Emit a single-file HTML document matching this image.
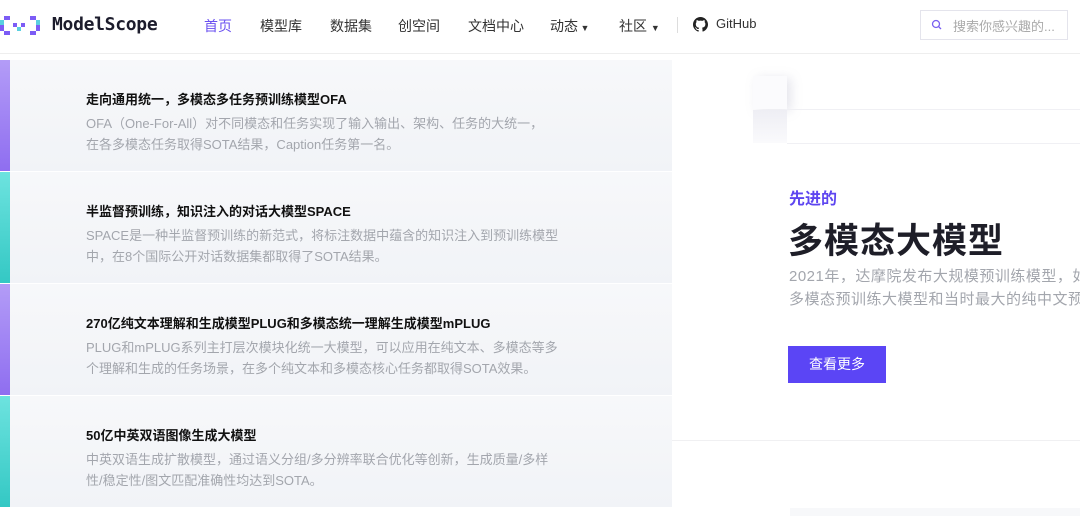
<!DOCTYPE html><html><head><meta charset="utf-8"><style>
*{margin:0;padding:0;box-sizing:border-box}
body{width:1080px;height:516px;overflow:hidden;background:#fff;font-family:"Liberation Sans","Noto Sans CJK SC",sans-serif;position:relative}
.a{position:absolute;white-space:nowrap}
.nav{font-size:14px;color:#333;top:16px}
.card{position:absolute;left:0;width:672px;height:111px;background:linear-gradient(180deg,#f7f8fa,#f1f3f7)}
.bar{position:absolute;left:0;top:0;width:10px;height:100%}
.p{background:linear-gradient(180deg,#b39cf7,#8f6ef0)}
.t{background:linear-gradient(180deg,#6de3df,#34c8c4)}
.card h3{position:absolute;left:86px;top:29px;font-size:13px;font-weight:bold;color:#111}
.card p{position:absolute;left:86px;top:53px;font-size:13px;line-height:21px;color:#a3a6ad;white-space:nowrap}
</style></head><body>
<svg class="a" style="left:0;top:14px" width="44" height="24" viewBox="0 0 44 24">
<rect x="4" y="2" width="6" height="4" fill="#7c5cf5"/><rect x="0" y="6" width="4" height="5" fill="#5ad0e0"/><rect x="0" y="11" width="4" height="6" fill="#7c5cf5"/><rect x="4" y="17" width="6" height="4" fill="#7c5cf5"/>
<rect x="13" y="9" width="4" height="4" fill="#7c5cf5"/><rect x="17" y="13" width="4" height="4" fill="#5ad0e0"/><rect x="21" y="9" width="4" height="4" fill="#7c5cf5"/>
<rect x="30" y="2" width="6" height="4" fill="#7c5cf5"/><rect x="36" y="6" width="4" height="5" fill="#5ad0e0"/><rect x="36" y="11" width="4" height="6" fill="#7c5cf5"/><rect x="30" y="17" width="6" height="4" fill="#7c5cf5"/></svg>
<div class="a" style="left:52px;top:14px;font-size:18px;font-weight:bold;color:#1c1c2c;letter-spacing:-0.3px;font-family:'DejaVu Sans Mono',monospace">ModelScope</div>
<div class="a nav" style="left:204px;color:#6a50f0">首页</div>
<div class="a nav" style="left:260px">模型库</div>
<div class="a nav" style="left:330px">数据集</div>
<div class="a nav" style="left:398px">创空间</div>
<div class="a nav" style="left:468px">文档中心</div>
<div class="a nav" style="left:550px">动态<span style="font-size:9px"> ▼</span></div>
<div class="a nav" style="left:619px">社区 <span style="font-size:9px"> ▼</span></div>
<div class="a" style="left:677px;top:17px;width:1px;height:16px;background:#ddd"></div>
<svg class="a" style="left:693px;top:17px" width="15" height="15" viewBox="0 0 16 16"><path fill="#222" d="M8 0C3.6 0 0 3.6 0 8c0 3.5 2.3 6.5 5.5 7.6.4.1.5-.2.5-.4v-1.4c-2.2.5-2.7-1-2.7-1-.4-.9-.9-1.2-.9-1.2-.7-.5.1-.5.1-.5.8.1 1.2.8 1.2.8.7 1.300 1.9.9 2.4.7.1-.5.3-.9.5-1.1-1.8-.2-3.600-.9-3.600-4 0-.9.3-1.6.8-2.100-.1-.2-.4-1 .1-2.1 0 0 .7-.2 2.2.8.6-.2 1.300-.3 2-.3s1.4.1 2 .3c1.5-1 2.2-.8 2.2-.8.4 1.1.2 1.9.1 2.1.5.6.8 1.3.8 2.1 0 3.1-1.9 3.7-3.6 3.9.3.3.5.8.5 1.5v2.2c0 .2.1.5.6.4C13.7 14.5 16 11.5 16 8c0-4.4-3.6-8-8-8z"/></svg>
<div class="a nav" style="left:716px;font-size:13px">GitHub</div>
<div class="a" style="left:920px;top:10px;width:148px;height:30px;border:1px solid #e4e4ec;"></div>
<svg class="a" style="left:931px;top:19px" width="12" height="12" viewBox="0 0 12 12"><circle cx="5" cy="5" r="3.5" fill="none" stroke="#7a60f0" stroke-width="1.3"/><path d="M7.6 7.6L10 10" stroke="#7a60f0" stroke-width="1.3"/></svg>
<div class="a" style="left:953px;top:16px;font-size:13px;color:#aaa">搜索你感兴趣的...</div>
<div class="a" style="left:0;top:53px;width:1080px;height:1px;background:#eee"></div>

<div class="card" style="top:60px"><div class="bar p"></div><h3>走向通用统一，多模态多任务预训练模型OFA</h3><p>OFA（One-For-All）对不同模态和任务实现了输入输出、架构、任务的大统一，<br>在各多模态任务取得SOTA结果，Caption任务第一名。</p></div>
<div class="card" style="top:172px"><div class="bar t"></div><h3>半监督预训练，知识注入的对话大模型SPACE</h3><p>SPACE是一种半监督预训练的新范式，将标注数据中蕴含的知识注入到预训练模型<br>中，在8个国际公开对话数据集都取得了SOTA结果。</p></div>
<div class="card" style="top:284px"><div class="bar p"></div><h3>270亿纯文本理解和生成模型PLUG和多模态统一理解生成模型mPLUG</h3><p>PLUG和mPLUG系列主打层次模块化统一大模型，可以应用在纯文本、多模态等多<br>个理解和生成的任务场景，在多个纯文本和多模态核心任务都取得SOTA效果。</p></div>
<div class="card" style="top:396px"><div class="bar t"></div><h3>50亿中英双语图像生成大模型</h3><p>中英双语生成扩散模型，通过语义分组/多分辨率联合优化等创新，生成质量/多样<br>性/稳定性/图文匹配准确性均达到SOTA。</p></div>

<div class="a" style="left:753px;top:76px;width:34px;height:33px;background:#fbfbfd;box-shadow:4px 2px 10px rgba(150,150,180,.25)"></div>
<div class="a" style="left:753px;top:110px;width:34px;height:33px;background:linear-gradient(180deg,#eeeef4,#fafafc)"></div>
<div class="a" style="left:787px;top:109px;width:293px;height:1px;background:#f0f0f4"></div>
<div class="a" style="left:787px;top:143px;width:293px;height:1px;background:#f0f0f4"></div>
<div class="a" style="left:789px;top:185px;font-size:16px;font-weight:bold;color:#5d45f0">先进的</div>
<div class="a" style="left:788px;top:213px;font-size:35px;font-weight:bold;color:#1e1e28;letter-spacing:1px">多模态大模型</div>
<div class="a" style="left:789px;top:265px;font-size:15px;color:#a3a6ad;line-height:23px;letter-spacing:.5px">2021年，达摩院发布大规模预训练模型，如业<br>多模态预训练大模型和当时最大的纯中文预训</div>
<div class="a" style="left:788px;top:346px;width:98px;height:37px;background:#5b45f5;color:#fff;font-size:14px;text-align:center;line-height:37px">查看更多</div>
<div class="a" style="left:672px;top:440px;width:408px;height:1px;background:#f0f0f2"></div>
<div class="a" style="left:790px;top:508px;width:290px;height:8px;background:#f7f8fa"></div>
</body></html>
